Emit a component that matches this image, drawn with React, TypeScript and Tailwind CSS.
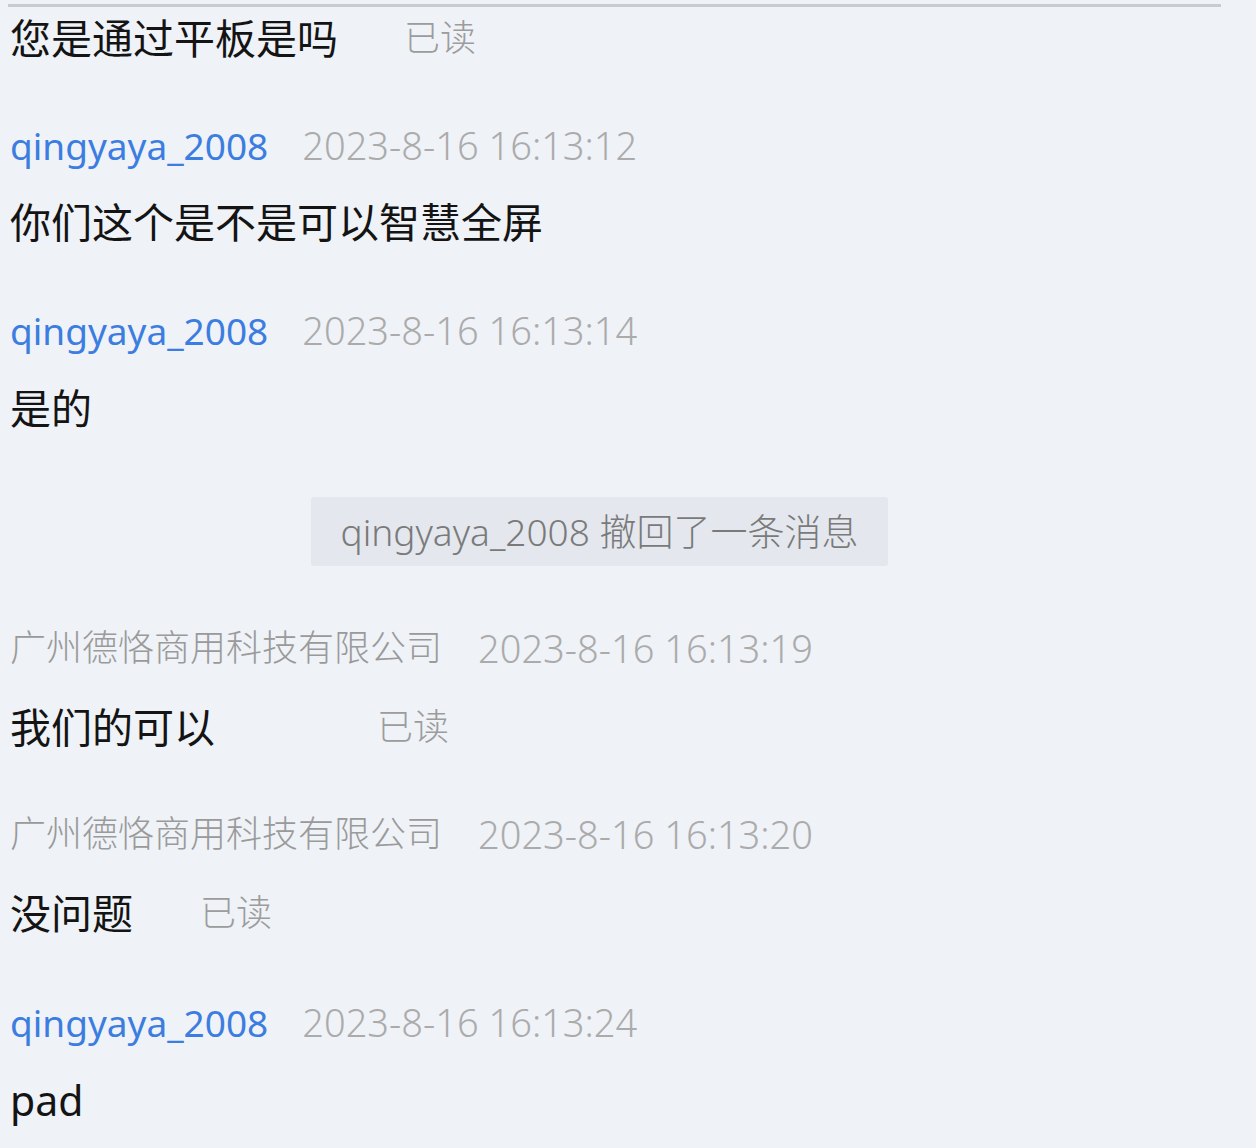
const cjk = "font-['Noto_Sans','Noto_Sans_CJK_SC',sans-serif]";

type Msg =
  | { kind: "head"; name: string; time: string; company?: boolean; mt: string }
  | { kind: "text"; text: string; read?: string; mt: string }
  | { kind: "sys"; text: string; mt: string };

const rows: Msg[] = [
  { kind: "text", text: "您是通过平板是吗", read: "ml-[66px]", mt: "mt-[1px]" },
  { kind: "head", name: "qingyaya_2008", time: "2023-8-16 16:13:12", mt: "mt-[47px]" },
  { kind: "text", text: "你们这个是不是可以智慧全屏", mt: "mt-[17px]" },
  { kind: "head", name: "qingyaya_2008", time: "2023-8-16 16:13:14", mt: "mt-[48px]" },
  { kind: "text", text: "是的", mt: "mt-[18px]" },
  { kind: "sys", text: "qingyaya_2008 撤回了一条消息", mt: "mt-[59px]" },
  { kind: "head", name: "广州德恪商用科技有限公司", time: "2023-8-16 16:13:19", company: true, mt: "mt-[52px]" },
  { kind: "text", text: "我们的可以", read: "ml-[162px]", mt: "mt-[19px]" },
  { kind: "head", name: "广州德恪商用科技有限公司", time: "2023-8-16 16:13:20", company: true, mt: "mt-[47px]" },
  { kind: "text", text: "没问题", read: "ml-[67px]", mt: "mt-[19px]" },
  { kind: "head", name: "qingyaya_2008", time: "2023-8-16 16:13:24", mt: "mt-[49px]" },
  { kind: "text", text: "pad", mt: "mt-[18px]" },
];

const Row = ({ m }: { m: Msg }) => {
  if (m.kind === "head") {
    return (
      <div className={`${m.mt} h-[60px] flex items-center pl-[10px] leading-none`}>
        <span className={m.company ? "text-[36px] text-[#9a9a9a] font-light" : "text-[37px] text-[#3b7de0]"}>{m.name}</span>
        <span className={`${m.company ? "ml-[36px]" : "ml-[34px]"} text-[38px] text-[#ababab] font-light`}>{m.time}</span>
      </div>
    );
  }
  if (m.kind === "sys") {
    return (
      <div className={`${m.mt} flex justify-center pr-[2px]`}>
        <div className="w-[577px] h-[69px] ml-[-55px] rounded-[3px] bg-[#e4e7ed] flex items-center justify-center text-[37px] leading-none text-[#7a7a7a] font-light">
          {m.text}
        </div>
      </div>
    );
  }
  return (
    <div className={`${m.mt} h-[60px] flex items-center pl-[10px] text-[41px] leading-none text-[#141414]`}>
      <span>{m.text}</span>
      {m.read && <span className={`${m.read} text-[36px] text-[#9c9c9c] font-light`}>已读</span>}
    </div>
  );
};

export default function App() {
  return (
    <div className={`w-[1256px] h-[1148px] bg-[#eff2f7] overflow-hidden ${cjk}`}>
      <div className="mt-[4px] ml-[8px] w-[1213px] h-[3px] bg-[#c9cbcf]" />
      {rows.map((m, i) => (
        <Row key={i} m={m} />
      ))}
    </div>
  );
}
